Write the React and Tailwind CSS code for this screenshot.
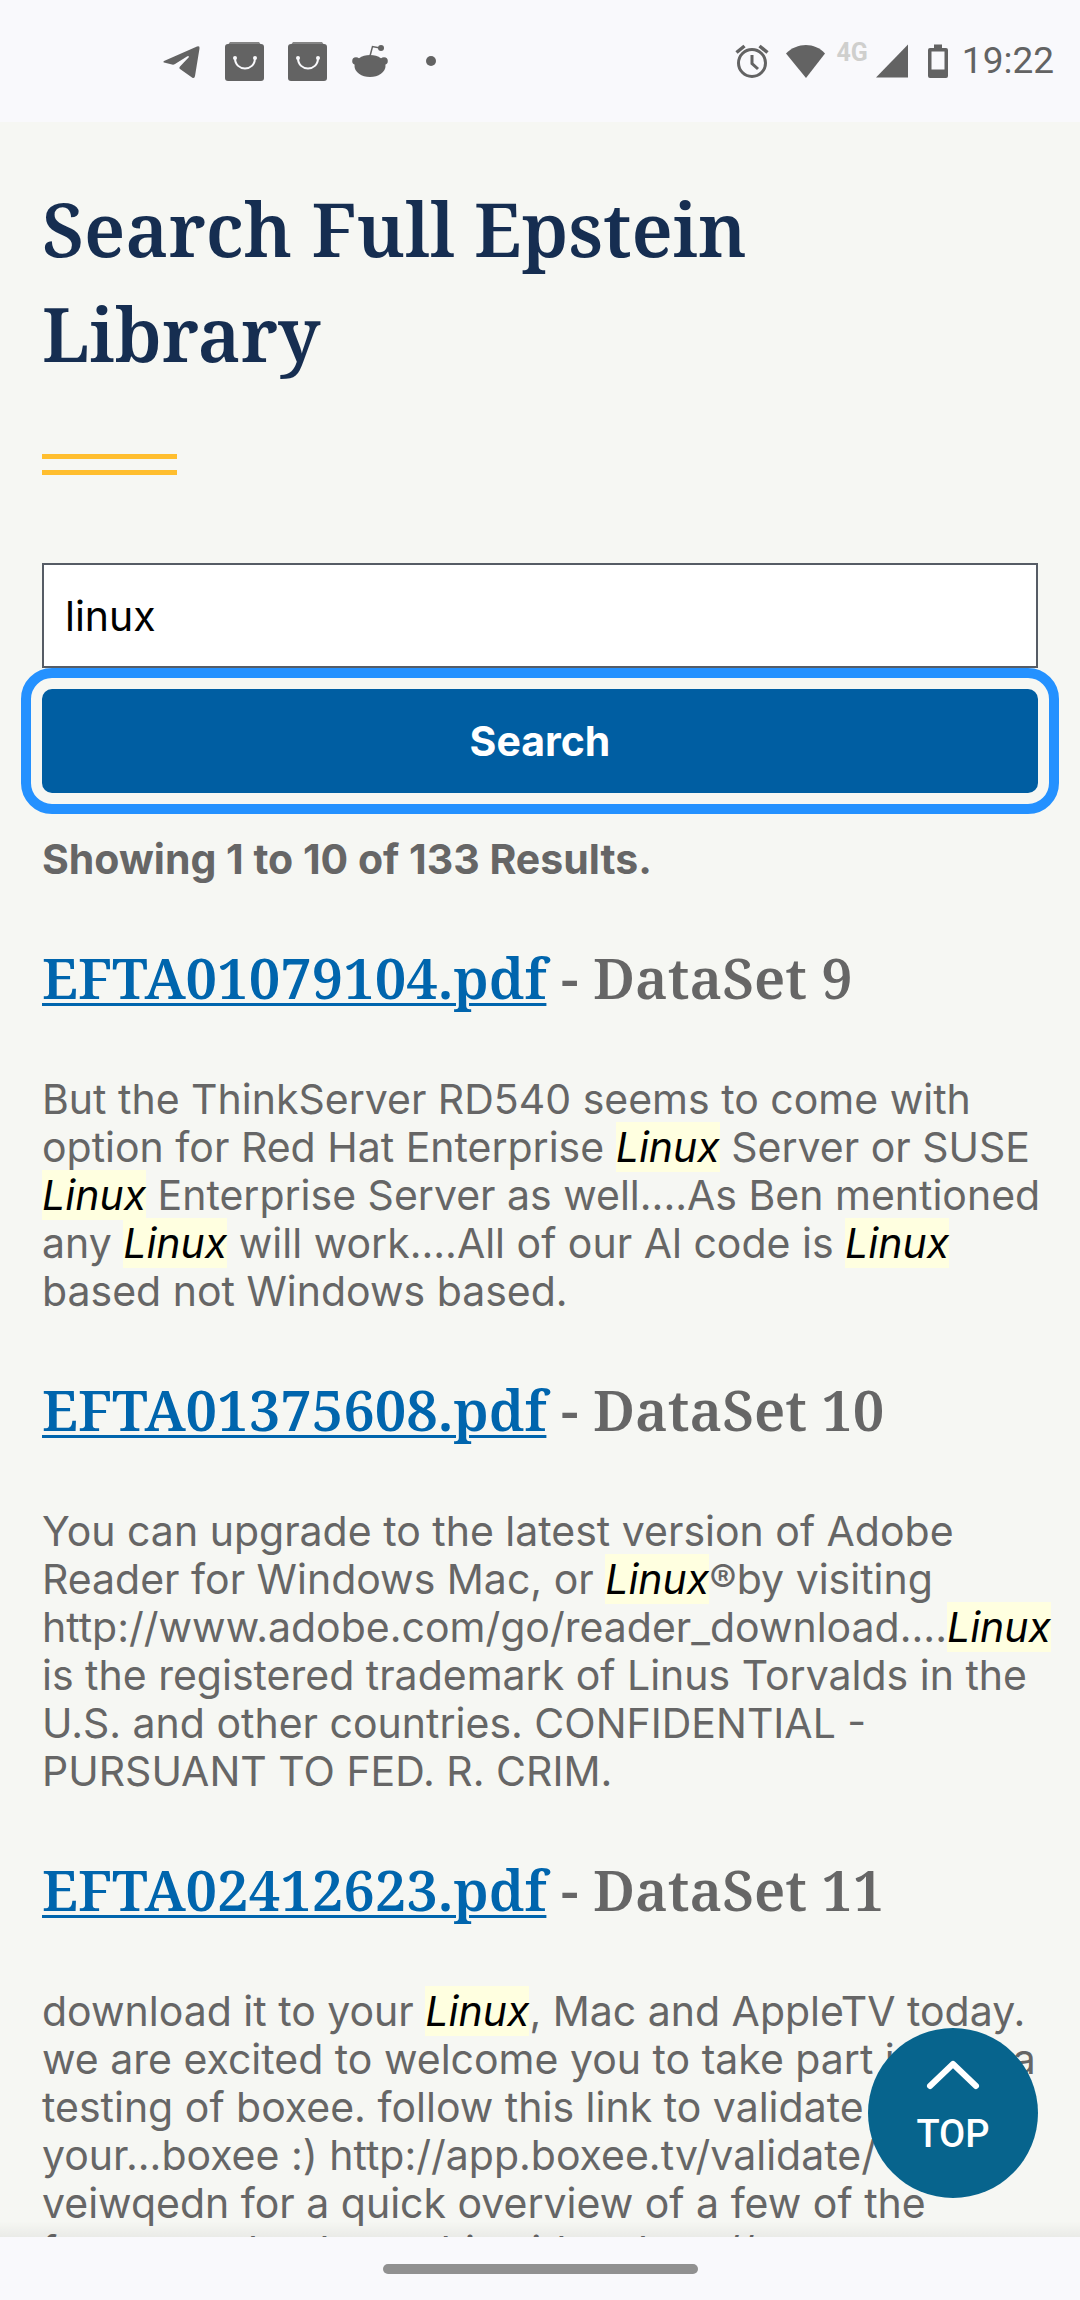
import React from 'react';

// Search results, {Linux} marks a highlighted hit
const results = [
  {
    file: 'EFTA01079104.pdf',
    dataset: 'DataSet 9',
    lines: [
      'But the ThinkServer RD540 seems to come with',
      'option for Red Hat Enterprise {Linux} Server or SUSE',
      '{Linux} Enterprise Server as well....As Ben mentioned',
      'any {Linux} will work....All of our Al code is {Linux}',
      'based not Windows based.',
    ],
  },
  {
    file: 'EFTA01375608.pdf',
    dataset: 'DataSet 10',
    lines: [
      'You can upgrade to the latest version of Adobe',
      'Reader for Windows Mac, or {Linux}®by visiting',
      'http://www.adobe.com/go/reader_download....{Linux}',
      'is the registered trademark of Linus Torvalds in the',
      'U.S. and other countries. CONFIDENTIAL -',
      'PURSUANT TO FED. R. CRIM.',
    ],
  },
  {
    file: 'EFTA02412623.pdf',
    dataset: 'DataSet 11',
    lines: [
      'download it to your {Linux}, Mac and AppleTV today.',
      'we are excited to welcome you to take part in alpha',
      'testing of boxee. follow this link to validate',
      'your...boxee :) http://app.boxee.tv/validate/',
      'veiwqedn for a quick overview of a few of the',
      'features, check out this video: http://www',
    ],
  },
];

function BagIcon() {
  return (
    <svg className="h-10 w-10" viewBox="0 0 40 40" fill="none">
      <path d="M5 1h29l3 4H2z" fill="#858585" />
      <rect x="0" y="3" width="39" height="37" rx="3" fill="#636363" />
      <path d="M10 17c0 14 20 14 20 0" stroke="#f9f9fc" strokeWidth="2" />
      <circle cx="10" cy="17" r="2" fill="#f9f9fc" />
      <circle cx="30" cy="17" r="2" fill="#f9f9fc" />
    </svg>
  );
}

function StatusBar() {
  return (
    <header className="flex h-[122px] shrink-0 items-center justify-between bg-[#f9f9fc] pr-[26px] pl-[162px] text-[#636363]">
      <div className="flex items-center gap-[23px]">
        <svg className="h-10 w-10" viewBox="0 0 40 40" fill="currentColor">
          <path d="M2 20 35 5.500q3-1 2.500 2L33 35q-.5 3-3 1.500L18 28q-1.500-1 0-2.500L27 16q-.5-1.500-2-.5L13 23q-1.500 1-3 .5l-8-2q-1.500-.5 0-1.500z" />
        </svg>
        <BagIcon />
        <BagIcon />
        <svg className="h-10 w-10" viewBox="0 0 40 40" fill="currentColor">
          <ellipse cx="19" cy="25" rx="15.500" ry="11" />
          <circle cx="5" cy="20" r="3.800" />
          <circle cx="33" cy="20" r="3.800" />
          <circle cx="30" cy="7" r="3" />
          <path d="M19 15 21.500 5.500 29 7" fill="none" stroke="currentColor" strokeWidth="1.500" />
        </svg>
        <span className="ml-3 h-[10px] w-[10px] rounded-full bg-[#636363]" />
      </div>

      <div className="flex items-center">
        <svg className="h-9 w-9" viewBox="0 0 36 36" fill="none" stroke="currentColor">
          <circle cx="18" cy="20" r="13.500" strokeWidth="3" />
          <path d="M18 12v8.500l6 5.500" strokeWidth="3" />
          <path d="M2.500 9.500 10.500 3M33.500 9.500 25.500 3" strokeWidth="3.500" />
        </svg>
        <svg className="ml-4 h-9 w-10" viewBox="0 0 40 36" fill="currentColor">
          <path d="M0 10.500C11-1 29-1 39 10.500L20 35z" />
        </svg>
        <span className="mb-[16px] ml-[10px] font-[Roboto] text-[25px] leading-6 font-bold text-[#cfcfcd]">4G</span>
        <svg className="ml-2 h-9 w-8" viewBox="0 0 32 36" fill="currentColor">
          <path d="M0 34.500 32 1.500v33z" />
        </svg>
        <svg className="ml-5 h-9 w-5" viewBox="0 0 20 36" fill="currentColor">
          <path fillRule="evenodd" d="M6 1.500h8V5h4q2 0 2 2v26q0 2-2 2H2q-2 0-2-2V7q0-2 2-2h4zM3.500 8.500v18h13v-18z" />
        </svg>
        <span className="ml-[14px] font-[Roboto] text-[37px] leading-[48px]">19:22</span>
      </div>
    </header>
  );
}

// Wraps every {hit} of a line in a highlighted <em>
function Line({ text }) {
  return (
    <span className="block whitespace-nowrap">
      {text.split(/[{}]/).map((part, i) =>
        i % 2 ? (
          <em key={i} className="bg-[#ffffe0] text-black">{part}</em>
        ) : (
          part
        )
      )}
    </span>
  );
}

function Result({ file, dataset, lines }) {
  return (
    <article>
      <h3 className="mt-[61px] mb-[65px] font-['Noto_Serif','Liberation_Serif',serif] text-[56px] leading-[66px] font-semibold">
        <a href={`#${file}`} className="text-[#0065ad] underline decoration-[3px] underline-offset-4">{file}</a>
        {' - '}
        {dataset}
      </h3>
      <p>
        {lines.map((line) => (
          <Line key={line} text={line} />
        ))}
      </p>
    </article>
  );
}

export default function App() {
  const [query, setQuery] = React.useState('linux');

  return (
    <div className="flex h-screen flex-col bg-[#f6f7f3] font-[Inter,'Liberation_Sans',sans-serif] text-[41px] leading-[48px] text-[#666666]">
      <StatusBar />

      <div className="relative min-h-0 flex-1 overflow-hidden">
        <main id="top" className="px-[42px] pt-[54px]">
          <h1 className="font-['Noto_Serif','Liberation_Serif',serif] text-[74px] leading-[105px] font-semibold text-[#162e51]">
            Search Full Epstein
            <br />
            Library
          </h1>
          <div className="mt-[68px] h-[21px] w-[135px] border-y-[5px] border-[#ffbe2e]" />

          <form className="mt-[88px] flex flex-col gap-[21px]" onSubmit={(e) => e.preventDefault()}>
            <input
              type="text"
              aria-label="Search"
              value={query}
              onChange={(e) => setQuery(e.target.value)}
              className="h-[105px] w-full border-2 border-[#565c65] bg-white px-[21px] text-black outline-none"
            />
            <button
              type="submit"
              className="h-[104px] w-full rounded-[10px] bg-[#005ea2] font-bold text-white outline-[10px] outline-offset-[11px] outline-[#2491ff]"
            >
              Search
            </button>
          </form>

          <p className="mt-[42px] font-bold">Showing 1 to 10 of 133 Results.</p>

          {results.map((result) => (
            <Result key={result.file} {...result} />
          ))}
        </main>

        <div className="absolute inset-x-0 bottom-0 h-4 bg-linear-to-b from-transparent to-black/5" />
        <a
          href="#top"
          className="absolute right-[42px] bottom-[39px] flex h-[170px] w-[170px] flex-col items-center rounded-full bg-[#07648d] pt-8 font-[Roboto] text-[38px] font-medium text-white"
        >
          <svg className="h-[30px] w-14" viewBox="0 0 56 30" fill="none" stroke="currentColor" strokeWidth="6" strokeLinecap="round" strokeLinejoin="round">
            <path d="M5 26 28 4l23 22" />
          </svg>
          <span className="mt-5">TOP</span>
        </a>
      </div>

      <footer className="flex h-[63px] shrink-0 items-center justify-center bg-[#f9f9fc]">
        <div className="h-[10px] w-[315px] rounded-full bg-[#919191]" />
      </footer>
    </div>
  );
}
